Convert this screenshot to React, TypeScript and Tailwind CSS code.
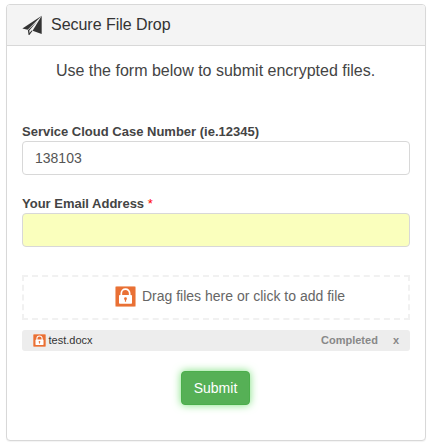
import { useState } from 'react';

interface DroppedFile {
  name: string;
  status: string;
}

function SendIcon() {
  return (
    <svg width="20" height="21" viewBox="0 0 20 21" fill="#333">
      {/* left wing */}
      <path d="M19.7 0.8 L0.4 13.6 L5.6 14.8 Z" />
      {/* right wing */}
      <path d="M19.7 0.8 L19.7 19 L10.6 15.8 Z" />
      {/* folded tail */}
      <path d="M15.2 6.2 L5.9 15.2 L6.6 20 L7.4 20 L10.6 15.8 L9.6 15.4 L7.5 18 L7.3 15.6 Z" />
    </svg>
  );
}

function LockIcon({ size }: { size: number }) {
  return (
    <svg width={size} height={size} viewBox="0 0 21 21" className="shrink-0">
      <rect width="21" height="21" rx="1.5" fill="#f5c3a7" />
      <rect x="0.8" y="0.8" width="19.4" height="19.4" rx="0.8" fill="#e97035" />
      <path d="M6.3 9.5 V7.4 a4.2 4.2 0 0 1 8.4 0 V9.5" fill="none" stroke="#fff" strokeWidth="1.7" />
      <rect x="4" y="9" width="13" height="8.8" rx="0.8" fill="#fff" />
      <circle cx="10.5" cy="12.7" r="1.4" fill="#e97035" />
      <rect x="9.9" y="13" width="1.2" height="2.7" fill="#e97035" />
    </svg>
  );
}

export default function App() {
  const [caseNumber, setCaseNumber] = useState('138103');
  const [email, setEmail] = useState('');
  const [files, setFiles] = useState<DroppedFile[]>([{ name: 'test.docx', status: 'Completed' }]);

  const removeFile = (name: string) => {
    setFiles((prev) => prev.filter((file) => file.name !== name));
  };

  return (
    <div className="h-[445px] w-[432px] bg-white pt-1 pl-1.5 font-['Liberation_Sans',Arial,sans-serif] text-[#444]">
      <div className="h-[437px] w-[420px] rounded-[4px] border border-[#d8d8d8] bg-white shadow-[0_1px_1px_rgba(0,0,0,0.05)]">
        {/* Panel heading */}
        <div className="flex h-[41px] items-center gap-[9px] rounded-t-[3px] border-b border-[#d8d8d8] bg-[#f4f4f4] pl-[15px]">
          <SendIcon />
          <h1 className="text-base leading-5 tracking-[-0.03px] text-[#333]">Secure File Drop</h1>
        </div>

        <form className="px-[15px]" onSubmit={(e) => e.preventDefault()}>
          <p className="pt-[15px] pr-px text-center text-base leading-5">
            Use the form below to submit encrypted files.
          </p>

          <div className="mt-[42px]">
            <label htmlFor="case" className="block text-[13px] leading-[18px] font-bold">
              Service Cloud Case Number (ie.12345)
            </label>
            <input
              id="case"
              value={caseNumber}
              onChange={(e) => setCaseNumber(e.target.value)}
              className="block h-[34px] w-full rounded-[4px] border border-[#d8d8d8] px-3 text-sm text-[#555] outline-none"
            />
          </div>

          <div className="mt-5">
            <label htmlFor="email" className="block text-[13px] leading-[18px] font-bold">
              Your Email Address <span className="font-normal text-[#f00]">*</span>
            </label>
            <input
              id="email"
              value={email}
              onChange={(e) => setEmail(e.target.value)}
              className="block h-[34px] w-full rounded-[4px] border border-[#d8d8d8] bg-[#faffbd] px-3 text-sm text-[#555] outline-none"
            />
          </div>

          {/* Drop zone */}
          <div className="mt-7 flex h-[45px] items-center justify-center gap-[6px] border-2 border-dashed border-[#f1f1f1] pb-[3px] pl-7 text-sm text-[#666]">
            <LockIcon size={21} />
            <span>Drag files here or click to add file</span>
          </div>

          <ul className="mt-2.5 h-[21px]">
            {files.map((file) => (
              <li
                key={file.name}
                className="flex h-[21px] items-center rounded-[3px] bg-[#ededed] pr-[11px] pl-[11px] text-[11px]"
              >
                <LockIcon size={13} />
                <span className="ml-[2.5px] text-[#333]">{file.name}</span>
                <span className="ml-auto font-bold text-[#888]">{file.status}</span>
                <button
                  type="button"
                  onClick={() => removeFile(file.name)}
                  className="ml-[15px] font-bold text-[#888]"
                >
                  x
                </button>
              </li>
            ))}
          </ul>

          <div className="mt-5 flex justify-center pr-px">
            <button
              type="submit"
              className="h-[34px] w-[69px] rounded-[4px] border border-[#4cae4c] bg-[#56b056] text-sm text-white shadow-[0_0_8px_#7be07b]"
            >
              Submit
            </button>
          </div>
        </form>
      </div>
    </div>
  );
}
